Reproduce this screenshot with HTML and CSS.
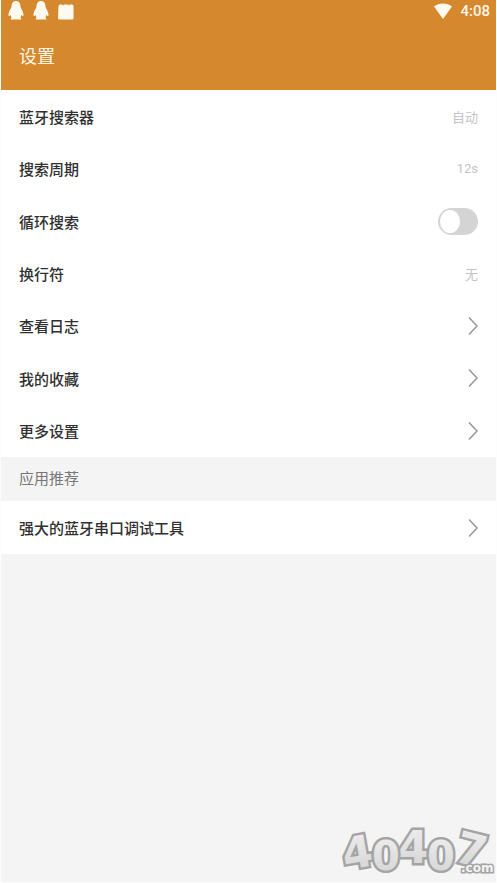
FILE: index.html
```html
<!DOCTYPE html>
<html lang="zh-CN">
<head>
<meta charset="utf-8">
<meta name="viewport" content="width=device-width, initial-scale=1">
<title>设置</title>
<link rel="stylesheet" href="styles.css">
</head>
<body>
<header class="top">
  <div class="status">
    <div class="notices">
      <svg width="18" height="20" viewBox="0 0 18 20" aria-hidden="true"><path d="M9 1C5.800 1 4.500 3.500 4.500 6.500C4.500 8.500 1.500 11 1.500 15C1.500 16.500 2.500 16 3.500 15L4.500 17.500L3.500 19.500H14.500L13.500 17.500L14.500 15C15.500 16 16.500 16.500 16.500 15C16.500 11 13.500 8.500 13.500 6.500C13.500 3.500 12.200 1 9 1Z"/></svg>
      <svg width="18" height="20" viewBox="0 0 18 20" aria-hidden="true"><path d="M9 1C5.800 1 4.500 3.500 4.500 6.500C4.500 8.500 1.500 11 1.500 15C1.500 16.500 2.500 16 3.500 15L4.500 17.500L3.500 19.500H14.500L13.500 17.500L14.500 15C15.500 16 16.500 16.500 16.500 15C16.500 11 13.500 8.500 13.500 6.500C13.500 3.500 12.200 1 9 1Z"/></svg>
      <svg width="18" height="20" viewBox="0 0 18 20" aria-hidden="true"><path d="M3 4.500H5L6 5.500L7 4.500H11L12 5.500L13 4.500H15Q16.500 4.500 16.500 6V18.500Q16.500 19.500 15.500 19.500H2.500Q1 19.500 1 18.500L1.500 6Q1.500 4.500 3 4.500Z"/></svg>
    </div>
    <div class="signal">
      <svg width="18" height="16" viewBox="0 0 18 16" aria-hidden="true"><path d="M0 3.500C5 -.5 13 -.5 18 3.500L9 16Z"/></svg>
      <time>4:08</time>
    </div>
  </div>
  <h1>设置</h1>
</header>
<main>
  <div class="list">
    <button class="row" type="button"><span>蓝牙搜索器</span><span class="value">自动</span></button>
    <button class="row" type="button"><span>搜索周期</span><span class="value">12s</span></button>
    <label class="row" for="loop"><span>循环搜索</span><input class="switch" id="loop" type="checkbox" role="switch"></label>
    <button class="row" type="button"><span>换行符</span><span class="value">无</span></button>
    <a class="row" href="#log"><span>查看日志</span><svg class="chevron" viewBox="0 0 10 20" aria-hidden="true"><path d="M1 1.500L9 10L1 18.500"/></svg></a>
    <a class="row" href="#favorites"><span>我的收藏</span><svg class="chevron" viewBox="0 0 10 20" aria-hidden="true"><path d="M1 1.500L9 10L1 18.500"/></svg></a>
    <a class="row" href="#more"><span>更多设置</span><svg class="chevron" viewBox="0 0 10 20" aria-hidden="true"><path d="M1 1.500L9 10L1 18.500"/></svg></a>
  </div>
  <h2>应用推荐</h2>
  <a class="row single" href="#tool"><span>强大的蓝牙串口调试工具</span><svg class="chevron" viewBox="0 0 10 20" aria-hidden="true"><path d="M1 1.500L9 10L1 18.500"/></svg></a>
</main>
<svg class="mark" width="162" height="60" viewBox="0 0 162 60" role="img" aria-label="40407.com">
  <defs>
    <linearGradient id="shine" x1="0" y1="0" x2="0" y2="1"><stop offset="0" stop-color="#f0f0f0"/><stop offset="1" stop-color="#d2d2d2"/></linearGradient>
  </defs>
  <g class="digits">
    <text x="7" y="46" transform="rotate(-10 22 30)">4</text>
    <text x="63" y="41">4</text>
    <text x="121" y="43" transform="rotate(14 136 28)">7</text>
    <text class="round" x="37" y="48">0</text>
    <text class="round" x="92" y="48">0</text>
  </g>
  <text class="domain" x="126" y="50">.com</text>
</svg>
</body>
</html>
```
FILE: styles.css
```css
* {
  box-sizing: border-box;
}

body {
  margin: 0;
  min-height: 100vh;
  border: solid #fdfdfd;
  border-width: 0 1px 1px;
  background: #f4f4f4;
  color: #303030;
  font-family: Roboto, "Noto Sans CJK SC", sans-serif;
  font-size: 15px;
}

.top {
  height: 90px;
  background: #d6882f;
  color: #fff6e4;
}

.status {
  display: flex;
  justify-content: space-between;
  height: 24px;
  padding: 0 6px;
}

.status svg {
  fill: #fffaf0;
}

.notices {
  display: flex;
  gap: 7px;
}

.signal {
  display: flex;
  align-items: center;
  gap: 8px;
  height: 22px;
  font-size: 15px;
  font-weight: 500;
}

h1 {
  margin: 0;
  padding: 0 18px;
  font-size: 18px;
  font-weight: 400;
  line-height: 66px;
}

.list {
  display: grid;
  grid-auto-rows: 1fr;
  min-height: 367px;
}

.row {
  display: flex;
  align-items: center;
  justify-content: space-between;
  width: 100%;
  padding: 0 18px;
  border: 0;
  background: #fff;
  color: inherit;
  font: inherit;
  font-weight: 500;
  text-align: left;
  text-decoration: none;
}

.single {
  min-height: 53px;
}

.value {
  color: #c4c4c4;
  font-size: 13px;
  font-weight: 400;
}

.chevron {
  width: 10px;
  height: 20px;
  fill: none;
  stroke: #969696;
  stroke-width: 1.5;
}

.switch {
  appearance: none;
  width: 40px;
  height: 27px;
  margin: 0;
  padding: 2px;
  border-radius: 14px;
  background: #d4d4d4;
}

.switch::before {
  content: "";
  display: block;
  width: 20px;
  height: 23px;
  border-radius: 50%;
  background: #fff;
}

.switch:checked::before {
  margin-left: auto;
}

h2 {
  margin: 0;
  padding: 0 18px;
  color: #777;
  font-size: 15px;
  font-weight: 400;
  line-height: 44px;
}

.mark {
  position: absolute;
  right: 0;
  bottom: 1px;
}

.digits text {
  fill: url(#shine);
  stroke: #a4a4a4;
  stroke-width: 5;
  stroke-linejoin: miter;
  paint-order: stroke;
  font: 700 44px "DejaVu Sans", sans-serif;
}

.digits .round {
  font-size: 40px;
}

.domain {
  fill: #f4f4f4;
  stroke: #a4a4a4;
  stroke-width: 3;
  paint-order: stroke;
  font: 700 12px "DejaVu Sans", sans-serif;
}
```
